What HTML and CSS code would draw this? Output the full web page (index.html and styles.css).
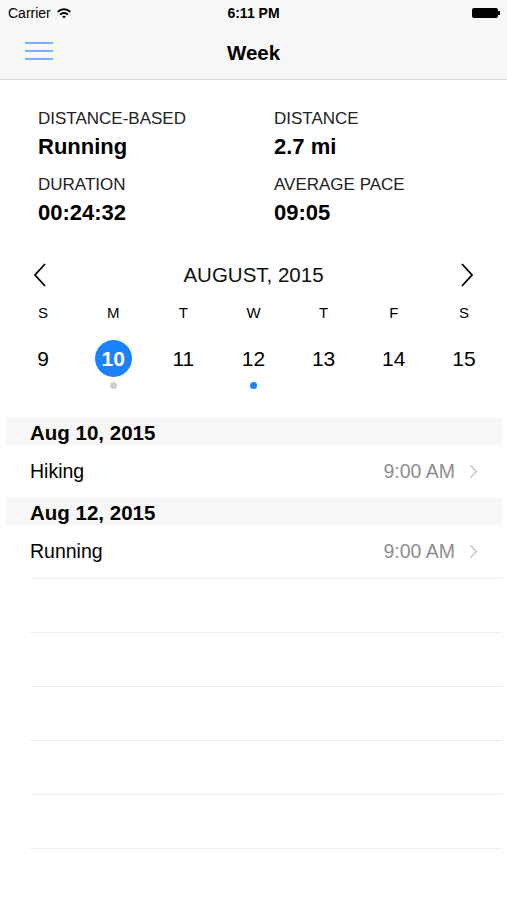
FILE: index.html
```html
<!DOCTYPE html>
<html lang="en">

<head>
    <meta charset="UTF-8">
    <meta name="viewport" content="width=device-width, initial-scale=1.0">
    <title>Week</title>
    <link rel="stylesheet" href="styles.css">
</head>

<body>
    <div class="status-bar">
        <div class="carrier">
            Carrier
            <svg class="wifi" width="16" height="12" viewBox="0 0 16 12">
                <path d="M1 4.2 A10 10 0 0 1 15 4.2 L13.6 5.6 A8 8 0 0 0 2.4 5.6 Z" fill="#000"/>
                <path d="M3.5 6.8 A6.4 6.4 0 0 1 12.5 6.8 L11.1 8.2 A4.4 4.4 0 0 0 4.9 8.2 Z" fill="#000"/>
                <path d="M6.2 9.5 A2.6 2.6 0 0 1 9.8 9.5 L8 11.4 Z" fill="#000"/>
            </svg>
        </div>
        <div class="clock">6:11 PM</div>
        <div class="battery">
            <span class="battery-body"></span>
            <span class="battery-tip"></span>
        </div>
    </div>

    <div class="nav-bar">
        <svg class="menu" width="28" height="20" viewBox="0 0 28 20">
            <line x1="0" y1="2" x2="28" y2="2" stroke="#4a9bf5" stroke-width="1.5"/>
            <line x1="0" y1="10" x2="28" y2="10" stroke="#4a9bf5" stroke-width="1.5"/>
            <line x1="0" y1="18" x2="28" y2="18" stroke="#4a9bf5" stroke-width="1.5"/>
        </svg>
        <h1>Week</h1>
    </div>

    <div class="stats">
        <div class="stat">
            <div class="stat-label">DISTANCE-BASED</div>
            <div class="stat-value">Running</div>
        </div>
        <div class="stat">
            <div class="stat-label">DISTANCE</div>
            <div class="stat-value">2.7 mi</div>
        </div>
        <div class="stat">
            <div class="stat-label">DURATION</div>
            <div class="stat-value">00:24:32</div>
        </div>
        <div class="stat">
            <div class="stat-label">AVERAGE PACE</div>
            <div class="stat-value">09:05</div>
        </div>
    </div>

    <div class="calendar">
        <div class="month-row">
            <svg class="arrow" width="14" height="24" viewBox="0 0 14 24">
                <polyline points="12,1 2,12 12,23" fill="none" stroke="#000" stroke-width="1.8"/>
            </svg>
            <div class="month">AUGUST, 2015</div>
            <svg class="arrow" width="14" height="24" viewBox="0 0 14 24">
                <polyline points="2,1 12,12 2,23" fill="none" stroke="#000" stroke-width="1.8"/>
            </svg>
        </div>
        <div class="week-row weekdays">
            <span>S</span><span>M</span><span>T</span><span>W</span><span>T</span><span>F</span><span>S</span>
        </div>
        <div class="week-row days">
            <div class="day"><span class="num">9</span></div>
            <div class="day"><span class="num selected">10</span><span class="dot grey"></span></div>
            <div class="day"><span class="num">11</span></div>
            <div class="day"><span class="num">12</span><span class="dot blue"></span></div>
            <div class="day"><span class="num">13</span></div>
            <div class="day"><span class="num">14</span></div>
            <div class="day"><span class="num">15</span></div>
        </div>
    </div>

    <div class="list">
        <div class="section-header">Aug 10, 2015</div>
        <div class="row">
            <span class="row-title">Hiking</span>
            <span class="row-time">9:00 AM</span>
            <svg class="chevron" width="9" height="15" viewBox="0 0 9 15">
                <polyline points="1.5,1.5 7.5,7.5 1.5,13.5" fill="none" stroke="#c7c7cc" stroke-width="1.5"/>
            </svg>
        </div>
        <div class="section-header">Aug 12, 2015</div>
        <div class="row">
            <span class="row-title">Running</span>
            <span class="row-time">9:00 AM</span>
            <svg class="chevron" width="9" height="15" viewBox="0 0 9 15">
                <polyline points="1.5,1.5 7.5,7.5 1.5,13.5" fill="none" stroke="#c7c7cc" stroke-width="1.5"/>
            </svg>
        </div>
        <div class="row empty"></div>
        <div class="row empty"></div>
        <div class="row empty"></div>
        <div class="row empty"></div>
        <div class="row empty"></div>
    </div>
</body>

</html>
```

FILE: styles.css
```css
body {
    margin: 0;
    font-family: "Liberation Sans", Arial, sans-serif;
    color: #000;
    background: #fff;
    width: 507px;
}

.status-bar {
    height: 26px;
    background: #f7f7f7;
    display: flex;
    align-items: center;
    justify-content: space-between;
    padding: 0 7px 0 8px;
    font-size: 14px;
    position: relative;
}

.carrier {
    display: flex;
    align-items: center;
    gap: 5px;
}

.clock {
    position: absolute;
    left: 0;
    right: 0;
    text-align: center;
    font-weight: bold;
}

.battery {
    display: flex;
    align-items: center;
}

.battery-body {
    width: 26px;
    height: 10px;
    background: #000;
    border-radius: 2px;
}

.battery-tip {
    width: 2px;
    height: 4px;
    background: #000;
}

.nav-bar {
    height: 53px;
    background: #f7f7f7;
    border-bottom: 1px solid #d9d9d9;
    display: flex;
    align-items: center;
    justify-content: center;
    position: relative;
}

.menu {
    position: absolute;
    left: 25px;
    top: 15px;
}

.nav-bar h1 {
    margin: 0;
    font-size: 20.5px;
    font-weight: bold;
}

.stats {
    display: grid;
    grid-template-columns: 236px 1fr;
    padding: 29px 0 0 38px;
    row-gap: 14px;
}

.stat-label {
    font-size: 17px;
    color: #222;
    line-height: 20px;
}

.stat-value {
    font-size: 22px;
    font-weight: bold;
    line-height: 28px;
    margin-top: 4px;
}

.calendar {
    padding: 35px 8px 0;
}

.month-row {
    display: flex;
    align-items: center;
    justify-content: space-between;
    padding: 0 25px;
    height: 26px;
}

.month {
    font-size: 20.5px;
    color: #111;
}

.week-row {
    display: grid;
    grid-template-columns: repeat(7, 1fr);
    text-align: center;
}

.weekdays {
    margin-top: 16px;
    font-size: 15px;
    line-height: 18px;
}

.days {
    margin-top: 18px;
    height: 78px;
}

.day {
    display: flex;
    flex-direction: column;
    align-items: center;
}

.num {
    width: 37px;
    height: 37px;
    line-height: 37px;
    font-size: 21px;
    border-radius: 50%;
}

.num.selected {
    background: #1a82fb;
    color: #fff;
    font-weight: bold;
}

.dot {
    width: 7px;
    height: 7px;
    border-radius: 50%;
    margin-top: 5px;
}

.dot.grey {
    background: #cfcfd2;
}

.dot.blue {
    background: #1a82fb;
}

.list {
    padding: 0 5px 0 6px;
}

.section-header {
    background: #f7f7f7;
    height: 27px;
    line-height: 29px;
    padding-left: 24px;
    font-size: 20.5px;
    font-weight: bold;
}

.row {
    height: 53px;
    margin-left: 24px;
    display: flex;
    align-items: center;
    font-size: 19.5px;
}

.row + .row {
    border-top: 1px solid #ececec;
}

.row:last-child {
    border-bottom: 1px solid #ececec;
}

.row-title {
    flex: 1;
}

.row-time {
    color: #8e8e93;
}

.chevron {
    margin: 0 24px 0 14px;
}
```
